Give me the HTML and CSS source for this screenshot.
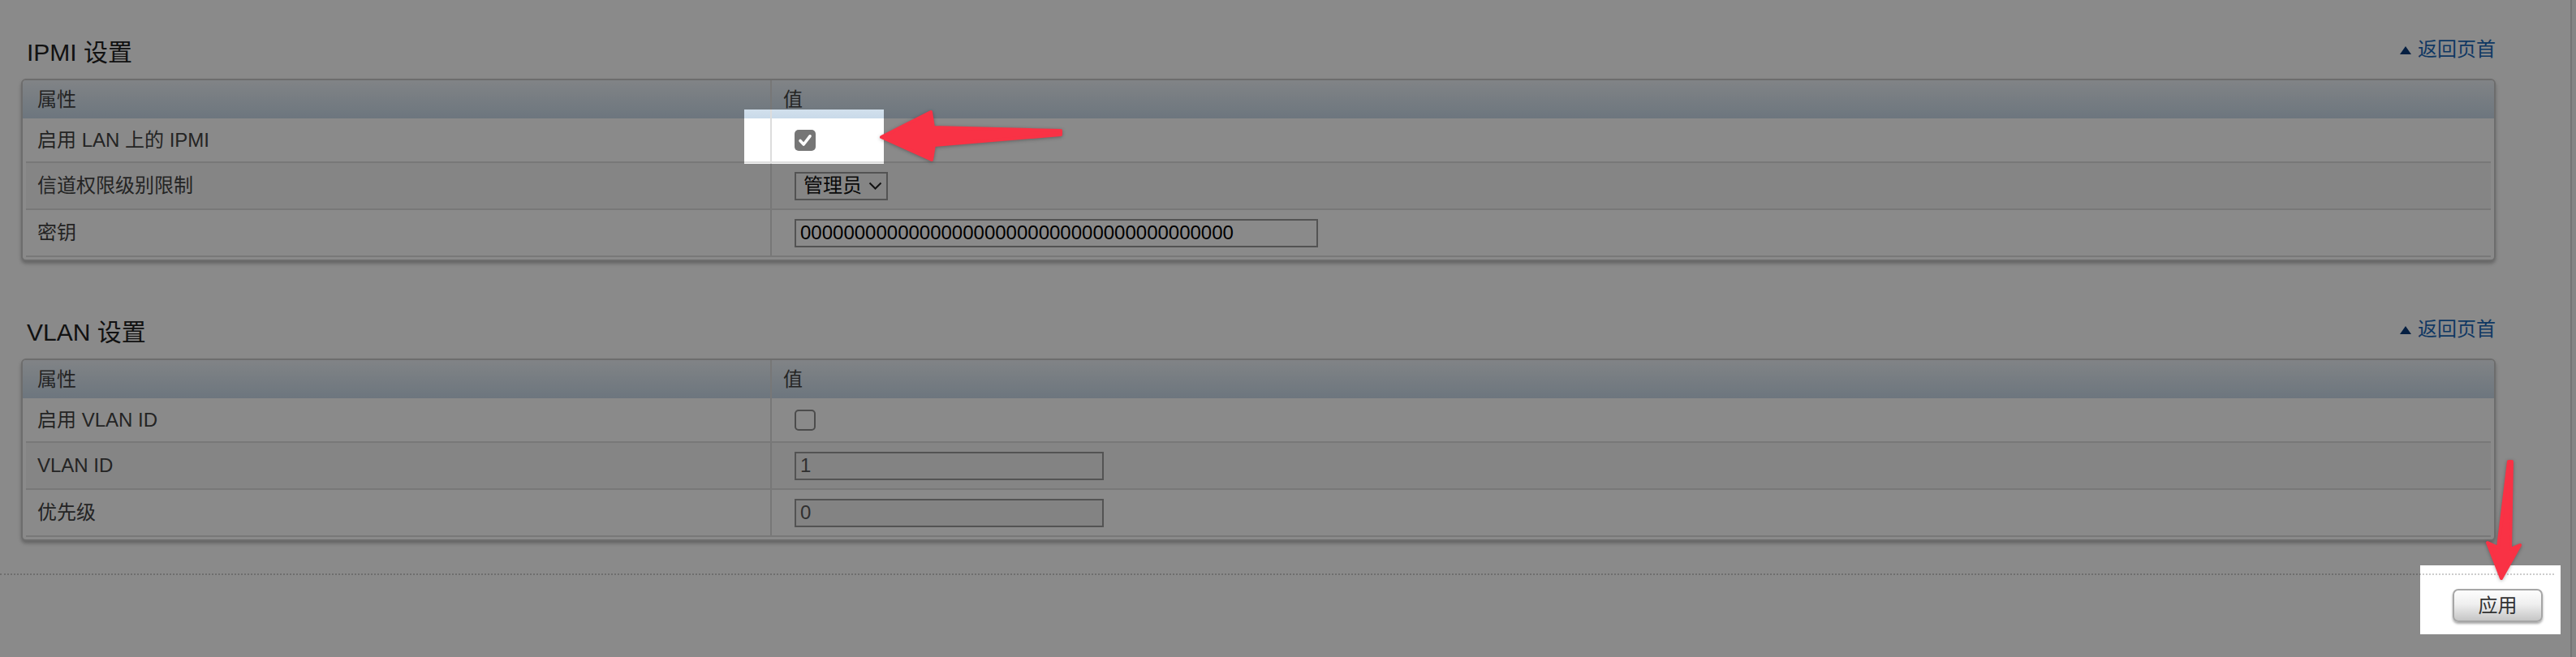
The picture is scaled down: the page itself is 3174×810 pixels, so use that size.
FILE: index.html
```html
<!DOCTYPE html>
<html lang="zh-CN">
<head>
<meta charset="utf-8">
<title>IPMI 设置</title>
<link rel="stylesheet" href="styles.css">
</head>
<body>
<div class="page">
  <div class="content">
    <div class="sections">
      <section class="section">
        <div class="section-head">
          <h2 class="section-title">IPMI 设置</h2>
          <a class="top-link" href="#"><span class="tri"></span>返回页首</a>
        </div>
        <div class="panel">
          <div class="panel-head">
            <div class="cell key">属性</div>
            <div class="cell val">值</div>
          </div>
          <div class="row short">
            <div class="cell key">启用 LAN 上的 IPMI</div>
            <div class="cell val"><span class="checkbox checked" role="checkbox" aria-checked="true"><svg width="26" height="26" viewBox="0 0 26 26"><path d="M7 13.5 L11.2 18 L19 7.8" fill="none" stroke="#fff" stroke-width="3.6" stroke-linecap="round" stroke-linejoin="round"/></svg></span></div>
          </div>
          <div class="row stripe">
            <div class="cell key">信道权限级别限制</div>
            <div class="cell val"><div class="select"><span>管理员</span><svg width="17" height="10" viewBox="0 0 17 10"><path d="M1.5 1.5 L8.5 8.5 L15.5 1.5" fill="none" stroke="#222" stroke-width="2"/></svg></div></div>
          </div>
          <div class="row">
            <div class="cell key">密钥</div>
            <div class="cell val"><input class="field wide" type="text" value="0000000000000000000000000000000000000000"></div>
          </div>
        </div>
      </section>

      <section class="section second">
        <div class="section-head">
          <h2 class="section-title">VLAN 设置</h2>
          <a class="top-link" href="#"><span class="tri"></span>返回页首</a>
        </div>
        <div class="panel">
          <div class="panel-head">
            <div class="cell key">属性</div>
            <div class="cell val">值</div>
          </div>
          <div class="row short">
            <div class="cell key">启用 VLAN ID</div>
            <div class="cell val"><span class="checkbox" role="checkbox" aria-checked="false"></span></div>
          </div>
          <div class="row stripe">
            <div class="cell key">VLAN ID</div>
            <div class="cell val"><input class="field narrow disabled" type="text" value="1" disabled></div>
          </div>
          <div class="row">
            <div class="cell key">优先级</div>
            <div class="cell val"><input class="field narrow disabled" type="text" value="0" disabled></div>
          </div>
        </div>
      </section>
    </div>
    <div class="actions">
      <button class="btn" type="button">应用</button>
    </div>
  </div>
  <div class="edge"></div>

  <svg class="overlay" width="3174" height="810" viewBox="0 0 3174 810">
    <path class="dim" fill-rule="evenodd" d="M0 0H3174V810H0Z M917 135V202H1089V135Z M2982 697V782H3155V697Z"/>
    <g class="arrows">
      <polygon points="1086,169 1147,138 1150,157 1307,161 1307,166 1151,179 1148,197"/>
      <polygon points="3091,569 3095,569 3093,677 3105,672 3082,713 3065,669 3078,675"/>
    </g>
  </svg>
</div>
</body>
</html>
```

FILE: styles.css
```css
* {
  box-sizing: border-box;
}

html, body {
  margin: 0;
  padding: 0;
}

body {
  width: 3174px;
  height: 810px;
  overflow: hidden;
  background: #ffffff;
  font-family: "Liberation Sans", "Noto Sans CJK SC", sans-serif;
  font-size: 24px;
  color: #444444;
}

.page {
  position: relative;
  display: flex;
  width: 3174px;
  height: 810px;
}

.content {
  width: 3167px;
  padding-right: 20px;
}

.edge {
  flex: 1;
  border-left: 2px solid #d9d9d9;
  background: #f6f6f6;
}

.sections {
  padding: 47px 72px 0 26px;
}

.section.second {
  margin-top: 70px;
}

.section-head {
  display: flex;
  justify-content: space-between;
  align-items: flex-start;
  height: 50px;
}

.section-title {
  margin: 0;
  padding-left: 7px;
  font-size: 30px;
  font-weight: normal;
  line-height: 36px;
  color: #222222;
}

.top-link {
  display: flex;
  align-items: center;
  gap: 8px;
  margin-top: -1px;
  font-size: 24px;
  line-height: 30px;
  color: #1b68b8;
  text-decoration: none;
}

.tri {
  width: 0;
  height: 0;
  border-left: 7.5px solid transparent;
  border-right: 7.5px solid transparent;
  border-bottom: 10px solid #0a3a7a;
  margin-top: 1px;
}

.panel {
  border: 2px solid #c9c9c9;
  border-radius: 6px;
  padding: 0 4px 3px;
  background: #ffffff;
  box-shadow: 0 3px 4px rgba(0, 0, 0, 0.28);
  overflow: hidden;
}

.panel-head {
  display: grid;
  grid-template-columns: 919px 1fr;
  height: 47px;
  margin: 0 -4px;
  padding: 0 4px;
  background: linear-gradient(#eef3f8, #c9dae9);
}

.row {
  display: grid;
  grid-template-columns: 919px 1fr;
  height: 58px;
  border-bottom: 2px solid #dedede;
}

.row.short {
  height: 55px;
}

.row.stripe {
  background: #f6f6f6;
}

.cell {
  display: flex;
  align-items: center;
  line-height: 30px;
  white-space: nowrap;
}

.cell.key {
  padding-left: 14px;
  border-right: 2px solid #dcdcdc;
}

.panel-head .cell.val {
  padding-left: 14px;
}

.row .cell.val {
  padding-left: 28px;
}

.checkbox {
  display: block;
  width: 26px;
  height: 26px;
  border: 2px solid #8c8c8c;
  border-radius: 5px;
  background: #ffffff;
}

.checkbox.checked {
  border: none;
  background: #767676;
}

.checkbox svg {
  display: block;
}

.select {
  display: flex;
  align-items: center;
  gap: 8px;
  width: 115px;
  height: 35px;
  padding-left: 9px;
  border: 2px solid #9a9a9a;
  color: #111111;
  line-height: 30px;
}

.select svg {
  display: block;
}

.field {
  display: block;
  height: 35px;
  margin: 0;
  padding: 0 5px;
  border: 2px solid #9a9a9a;
  border-radius: 0;
  background: #ffffff;
  font-family: "Liberation Sans", "Noto Sans CJK SC", sans-serif;
  font-size: 24px;
  color: #000000;
  outline: none;
}

.field.wide {
  width: 645px;
}

.field.narrow {
  width: 381px;
}

.field.disabled {
  background: #f3f3f3;
  color: #5a5a5a;
}

.actions {
  display: flex;
  justify-content: flex-end;
  margin-top: 40px;
  padding: 17px 14px 0 0;
  border-top: 2px dotted #cccccc;
}

.btn {
  width: 111px;
  height: 41px;
  padding: 0;
  border: 2px solid #a6a6a6;
  border-radius: 7px;
  background: linear-gradient(#fdfdfd, #efefef 45%, #c6c6c6);
  box-shadow: 0 2px 3px rgba(0, 0, 0, 0.35);
  font-family: "Liberation Sans", "Noto Sans CJK SC", sans-serif;
  font-size: 24px;
  line-height: 30px;
  color: #333333;
}

.overlay {
  position: absolute;
  left: 0;
  top: 0;
  pointer-events: none;
}

.dim {
  fill: rgba(0, 0, 0, 0.46);
}

.arrows {
  fill: #f93245;
  stroke: #f93245;
  stroke-width: 4;
  stroke-linejoin: round;
  filter: drop-shadow(0 1px 2px rgba(0, 0, 0, 0.3));
}
```
